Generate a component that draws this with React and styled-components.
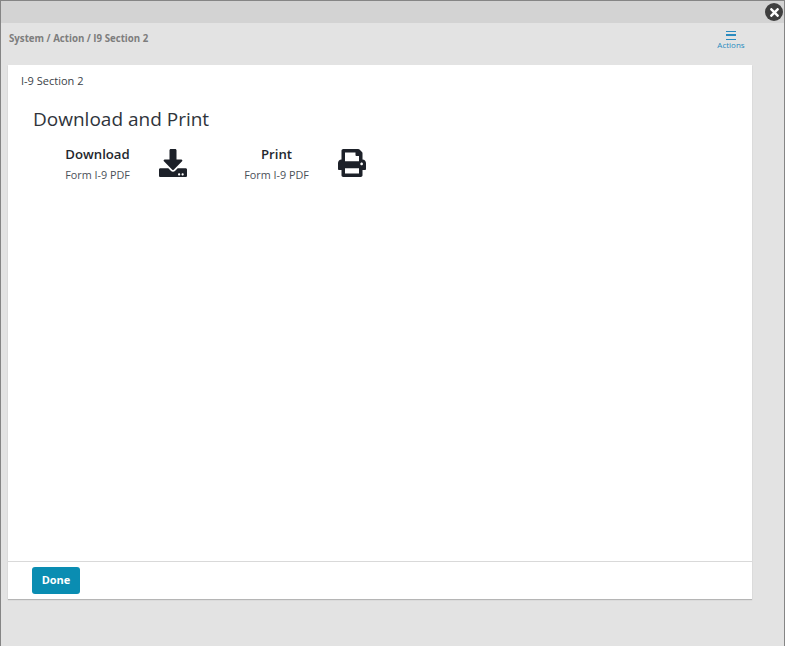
import React from 'react';
import styled, { createGlobalStyle } from 'styled-components';
import { FaDownload, FaPrint, FaTimes } from 'react-icons/fa';

const GlobalStyle = createGlobalStyle`
    html, body {
        margin: 0;
        padding: 0;
        background: #e3e3e3;
        font-family: "Open Sans", "Liberation Sans", sans-serif;
    }
`;

const Window = styled.div`
    position: relative;
    box-sizing: border-box;
    width: 785px;
    height: 646px;
    display: flex;
    flex-direction: column;
    background-color: #e3e3e3;
    border: 1px solid #858585;
    border-bottom: none;
    overflow: hidden;
`;

const TopBar = styled.div`
    height: 22px;
    flex-shrink: 0;
    background-color: #d3d3d3;
`;

const CloseButton = styled.button`
    position: absolute;
    top: 2px;
    right: 1px;
    width: 18px;
    height: 18px;
    padding: 0;
    border: none;
    border-radius: 50%;
    background-color: #3f3f3f;
    color: #ffffff;
    display: flex;
    align-items: center;
    justify-content: center;
    font-size: 13px;
`;

const Header = styled.div`
    height: 42px;
    flex-shrink: 0;
    display: flex;
    justify-content: space-between;
    padding: 0 6px 0 8px;
`;

const Breadcrumb = styled.div`
    margin-top: 8px;
    font-size: 9.7px;
    line-height: 15px;
    font-weight: 700;
    color: #7d7d7d;
`;

const ActionsButton = styled.div`
    width: 28px;
    margin: 8px 33px 0 0;
    display: flex;
    flex-direction: column;
    align-items: center;
    color: #2a8bbf;
`;

const MenuBars = styled.div`
    width: 10px;
    height: 9px;
    border-top: 1.5px solid #2a8bbf;
    border-bottom: 1.5px solid #2a8bbf;
    box-sizing: border-box;
    position: relative;
    &::after {
        content: '';
        position: absolute;
        left: 0;
        right: 0;
        top: 2.25px;
        height: 1.5px;
        background-color: #2a8bbf;
    }
`;

const ActionsLabel = styled.span`
    font-size: 8px;
    line-height: 10px;
`;

const Card = styled.div`
    width: 744px;
    height: 534px;
    margin-left: 7px;
    flex-shrink: 0;
    display: flex;
    flex-direction: column;
    background-color: #ffffff;
    box-shadow: 0 1px 1px #b5b5b5;
`;

const CardBody = styled.div`
    flex: 1;
    padding: 8px 13px;
`;

const CardTitle = styled.div`
    font-size: 11px;
    line-height: 16px;
    color: #3a3f47;
`;

const Heading = styled.h1`
    margin: 17px 0 0 12px;
    font-size: 19px;
    line-height: 26px;
    font-weight: 400;
    color: #2f343b;
`;

const Options = styled.div`
    display: flex;
    margin: 12px 0 0 44px;
`;

const Option = styled.div`
    width: ${(props) => props.$width}px;
    display: flex;
    align-items: flex-start;
`;

const OptionText = styled.div`
    width: 65px;
    display: flex;
    flex-direction: column;
    align-items: center;
`;

const OptionName = styled.div`
    font-size: 13.2px;
    line-height: 20px;
    font-weight: 600;
    color: #23272e;
`;

const OptionNote = styled.div`
    margin-top: 3px;
    font-size: 10.8px;
    line-height: 16px;
    color: #4b5058;
`;

const OptionIcon = styled.div`
    margin: 5px 0 0 29px;
    display: flex;
    font-size: 28px;
    color: #1d2129;
`;

const Footer = styled.div`
    height: 38px;
    box-sizing: border-box;
    border-top: 1px solid #d9d9d9;
    padding: 5px 24px;
`;

const DoneButton = styled.button`
    width: 48px;
    height: 27px;
    padding: 0 0 2px;
    border: none;
    border-radius: 3px;
    background-color: #0a8db2;
    color: #ffffff;
    font-family: inherit;
    font-size: 11px;
    font-weight: 700;
`;

function App() {
    return (
        <Window>
            <GlobalStyle />
            <TopBar />
            <CloseButton>
                <FaTimes />
            </CloseButton>
            <Header>
                <Breadcrumb>System / Action / I9 Section 2</Breadcrumb>
                <ActionsButton>
                    <MenuBars />
                    <ActionsLabel>Actions</ActionsLabel>
                </ActionsButton>
            </Header>
            <Card>
                <CardBody>
                    <CardTitle>I-9 Section 2</CardTitle>
                    <Heading>Download and Print</Heading>
                    <Options>
                        <Option $width={179}>
                            <OptionText>
                                <OptionName>Download</OptionName>
                                <OptionNote>Form I-9 PDF</OptionNote>
                            </OptionText>
                            <OptionIcon>
                                <FaDownload />
                            </OptionIcon>
                        </Option>
                        <Option $width={180}>
                            <OptionText>
                                <OptionName>Print</OptionName>
                                <OptionNote>Form I-9 PDF</OptionNote>
                            </OptionText>
                            <OptionIcon>
                                <FaPrint />
                            </OptionIcon>
                        </Option>
                    </Options>
                </CardBody>
                <Footer>
                    <DoneButton>Done</DoneButton>
                </Footer>
            </Card>
        </Window>
    );
}

export default App;
